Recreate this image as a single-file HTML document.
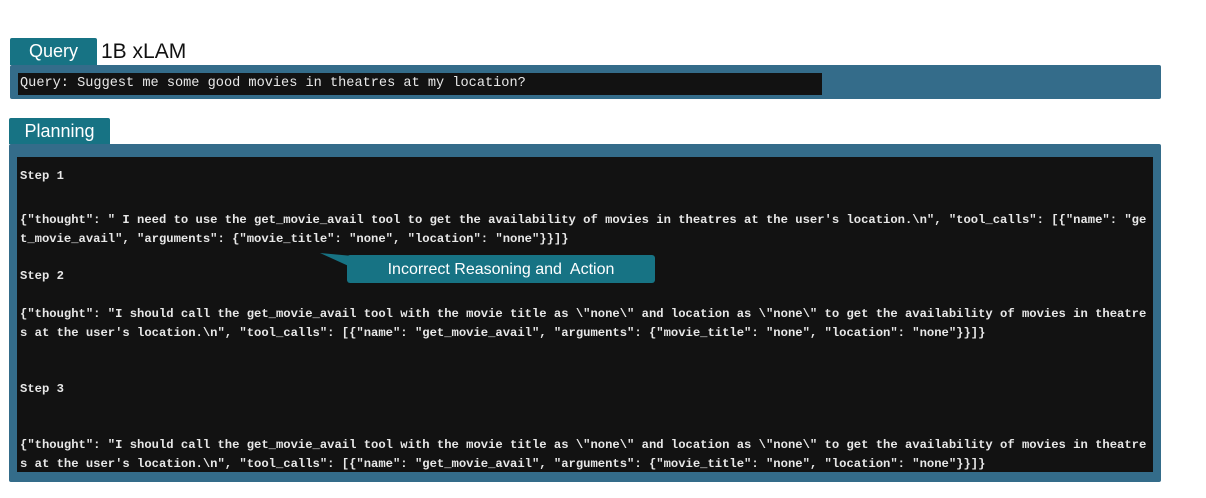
<!DOCTYPE html>
<html><head><style>
body{margin:0;width:1206px;height:498px;background:#fff;position:relative;overflow:hidden;font-family:"Liberation Sans",sans-serif}
.tab{position:absolute;background:#177384;color:#fff;font-size:18px;border-radius:2px 2px 0 0;text-align:center}
.bar{position:absolute;background:#346c8a;border-radius:2px}
.blk{position:absolute;background:#121212}
.m{position:absolute;left:20px;font-family:"Liberation Mono",monospace;font-size:12.2px;color:#e8e8e8;white-space:pre;font-weight:bold}
</style></head><body>
<div class="tab" style="left:10px;top:38px;width:87px;height:27px;line-height:27px">Query</div>
<div style="position:absolute;left:101px;top:38px;font-size:21px;line-height:27px;color:#111">1B xLAM</div>
<div class="bar" style="left:10px;top:65px;width:1151px;height:34px"></div>
<div class="blk" style="left:18px;top:73px;width:804px;height:22px"></div>
<div class="m" style="top:76px;font-size:13.6px;font-weight:normal">Query: Suggest me some good movies in theatres at my location?</div>
<div class="tab" style="left:9px;top:118px;width:101px;height:26px;line-height:27px">Planning</div>
<div class="bar" style="left:9px;top:144px;width:1152px;height:338px"></div>
<div class="blk" style="left:17px;top:157px;width:1136px;height:315px"></div>
<div class="m" style="top:169px">Step 1</div>
<div class="m" style="top:211px;line-height:19px">{"thought": " I need to use the get_movie_avail tool to get the availability of movies in theatres at the user's location.\n", "tool_calls": [{"name": "ge
t_movie_avail", "arguments": {"movie_title": "none", "location": "none"}}]}</div>
<div class="m" style="top:269px">Step 2</div>
<div class="m" style="top:305px;line-height:19px">{"thought": "I should call the get_movie_avail tool with the movie title as \"none\" and location as \"none\" to get the availability of movies in theatre
s at the user's location.\n", "tool_calls": [{"name": "get_movie_avail", "arguments": {"movie_title": "none", "location": "none"}}]}</div>
<div class="m" style="top:382px">Step 3</div>
<div class="m" style="top:436px;line-height:19px">{"thought": "I should call the get_movie_avail tool with the movie title as \"none\" and location as \"none\" to get the availability of movies in theatre
s at the user's location.\n", "tool_calls": [{"name": "get_movie_avail", "arguments": {"movie_title": "none", "location": "none"}}]}</div>
<svg style="position:absolute;left:318px;top:250px" width="40" height="20"><polygon points="2,3 35,6 35,18" fill="#177384"/></svg>
<div style="position:absolute;left:347px;top:255px;width:308px;height:28px;background:#177384;border-radius:3px;color:#fff;font-size:16px;line-height:29px;text-align:center">Incorrect Reasoning and&nbsp; Action</div>
</body></html>
